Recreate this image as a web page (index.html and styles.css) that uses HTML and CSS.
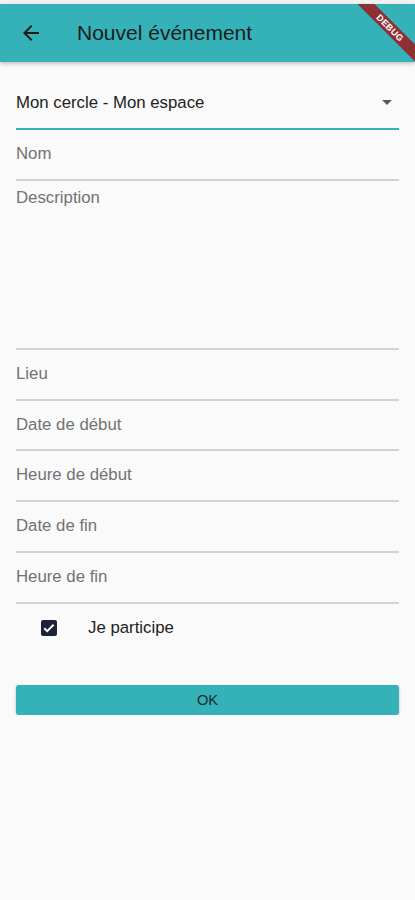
FILE: index.html
```html
<!DOCTYPE html>
<html lang="fr">
<head>
  <meta charset="UTF-8" />
  <title>Nouvel événement</title>
  <link rel="stylesheet" href="styles.css">
</head>
<body>
<div class="status"></div>
<header class="appbar">
  <button class="back" type="button">
    <svg width="24" height="24" viewBox="0 0 24 24"><path d="M20 11H7.83l5.59-5.59L12 4l-8 8 8 8 1.41-1.41L7.83 13H20v-2z" fill="#1d1d1d"/></svg>
  </button>
  <h1 class="title">Nouvel événement</h1>
</header>
<div class="banner-clip">
  <div class="banner">DEBUG</div>
</div>

<form class="content">
  <div class="dropdown">
    <span>Mon cercle - Mon espace</span>
    <svg width="24" height="24" viewBox="0 0 24 24"><path d="M7 10l5 5 5-5z" fill="#5a5a5a"/></svg>
  </div>
  <div class="field">Nom</div>
  <div class="field description">Description</div>
  <div class="field">Lieu</div>
  <div class="field">Date de début</div>
  <div class="field">Heure de début</div>
  <div class="field">Date de fin</div>
  <div class="field">Heure de fin</div>

  <label class="check-row">
    <span class="checkbox">
      <svg width="16" height="16" viewBox="0 0 16 16"><path d="M3.2 8.2l3 3 6.4-6.4" fill="none" stroke="#fff" stroke-width="2"/></svg>
    </span>
    Je participe
  </label>

  <button class="ok" type="button">OK</button>
</form>
</body>
</html>
```

FILE: styles.css
```css
body {
  margin: 0;
  background-color: #fafafa;
  font-family: "Liberation Sans", Arial, sans-serif;
}
.status {
  height: 4px;
  background-color: #f1f1f1;
}
.appbar {
  height: 58px;
  background-color: #35b1b8;
  display: flex;
  align-items: center;
  box-shadow: 0 2px 4px rgba(0, 0, 0, 0.22);
}
.back {
  border: none;
  background: none;
  padding: 0;
  margin: 0 0 0 19px;
  width: 24px;
  height: 24px;
}
.title {
  margin: 0 0 0 34px;
  font-size: 21px;
  font-weight: 400;
  color: #1b1b1b;
}
.banner-clip {
  position: absolute;
  top: 4px;
  right: 0;
  width: 80px;
  height: 60px;
  overflow: hidden;
}
.banner {
  position: absolute;
  left: -5px;
  top: 18px;
  width: 120px;
  height: 12px;
  line-height: 12px;
  background-color: #8e2f33;
  color: white;
  font-size: 9px;
  font-weight: 700;
  text-align: center;
  letter-spacing: 0.3px;
  transform: rotate(45deg);
}
.content {
  padding: 0 16px;
}
.dropdown {
  margin-top: 16px;
  height: 52px;
  box-sizing: border-box;
  border-bottom: 2px solid #35b1b8;
  display: flex;
  justify-content: space-between;
  align-items: flex-start;
  padding-top: 15px;
  font-size: 16.8px;
  color: #222;
}
.dropdown span {
  line-height: 20px;
}
.dropdown svg {
  margin-top: -3px;
}
.field {
  height: 50.8px;
  box-sizing: border-box;
  padding-top: 14px;
  line-height: 20px;
  font-size: 16.8px;
  color: #727272;
  border-bottom: 2px solid #d2d2d2;
}
.description {
  height: 169px;
  padding-top: 7px;
}
.check-row {
  display: flex;
  align-items: center;
  height: 48px;
  padding-left: 25px;
  font-size: 16.8px;
  color: #222;
}
.checkbox {
  width: 16px;
  height: 16px;
  border-radius: 2px;
  background-color: #1c2237;
  margin-right: 31px;
  display: flex;
}
.ok {
  display: block;
  width: 100%;
  height: 30px;
  margin-top: 33px;
  border: none;
  border-radius: 3px;
  background-color: #35b1b8;
  box-shadow: 0 1px 3px rgba(0, 0, 0, 0.25);
  font-family: "Liberation Sans", Arial, sans-serif;
  font-size: 14.7px;
  font-weight: 400;
  color: #1b2b2b;
}
```
